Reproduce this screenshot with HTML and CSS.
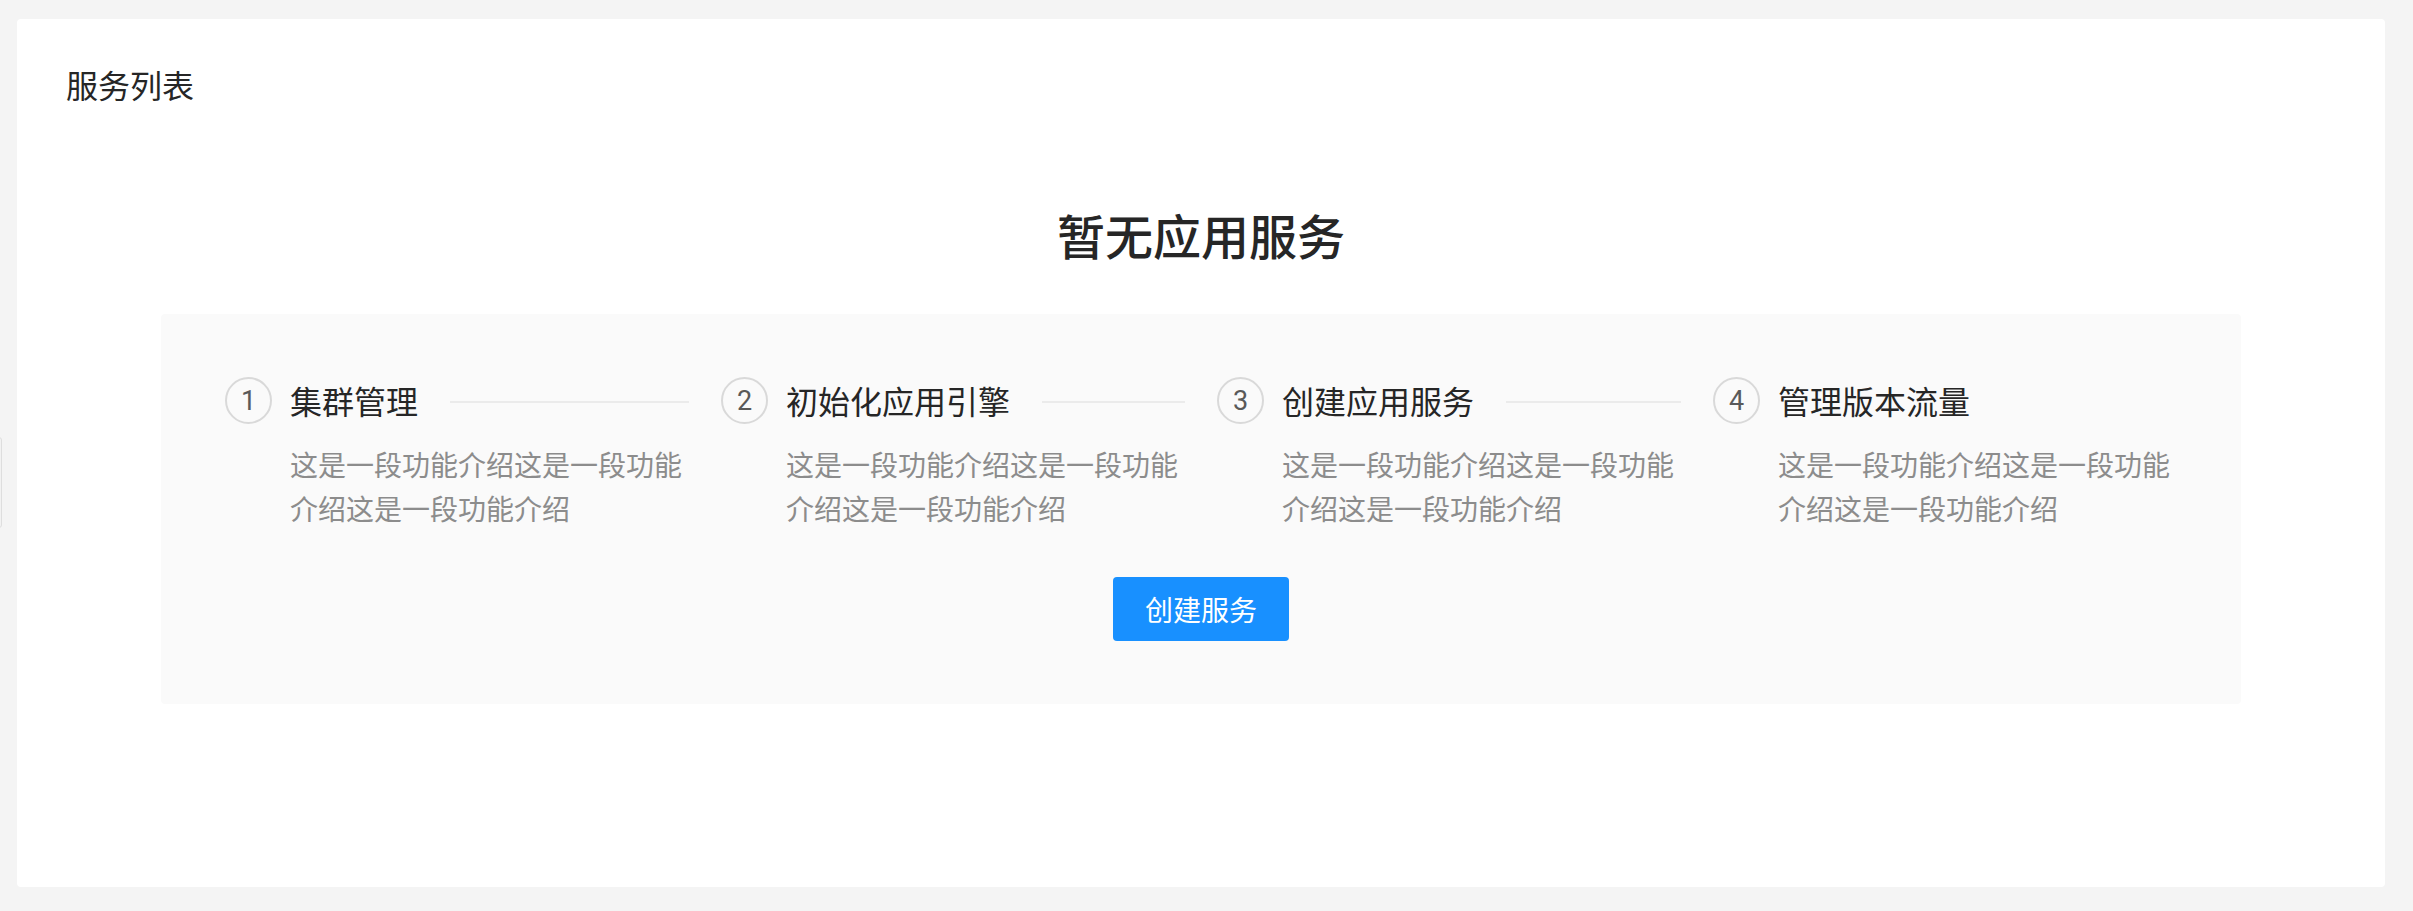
FILE: index.html
```html
<!DOCTYPE html>
<html lang="zh-CN">
<head>
<meta charset="utf-8">
<title>服务列表</title>
<link rel="stylesheet" href="styles.css">
</head>
<body>
<div class="page">
  <div class="edge-handle"></div>
  <div class="card">
    <div class="card-title">服务列表</div>
    <h1 class="empty-title">暂无应用服务</h1>
    <div class="guide">
      <div class="steps">
        <div class="step">
          <div class="step-icon">1</div>
          <div class="step-content">
            <div class="step-title">集群管理</div>
            <div class="step-desc">这是一段功能介绍这是一段功能介绍这是一段功能介绍</div>
          </div>
        </div>
        <div class="step">
          <div class="step-icon">2</div>
          <div class="step-content">
            <div class="step-title">初始化应用引擎</div>
            <div class="step-desc">这是一段功能介绍这是一段功能介绍这是一段功能介绍</div>
          </div>
        </div>
        <div class="step">
          <div class="step-icon">3</div>
          <div class="step-content">
            <div class="step-title">创建应用服务</div>
            <div class="step-desc">这是一段功能介绍这是一段功能介绍这是一段功能介绍</div>
          </div>
        </div>
        <div class="step step-last">
          <div class="step-icon">4</div>
          <div class="step-content">
            <div class="step-title">管理版本流量</div>
            <div class="step-desc">这是一段功能介绍这是一段功能介绍这是一段功能介绍</div>
          </div>
        </div>
      </div>
      <div class="actions">
        <button class="btn-primary" type="button">创建服务</button>
      </div>
    </div>
  </div>
</div>
</body>
</html>
```

FILE: styles.css
```css
* {
  box-sizing: border-box;
}

html, body {
  margin: 0;
  padding: 0;
  background: #f4f4f4;
}

body {
  font-family: "Noto Sans CJK SC", "Noto Sans", sans-serif;
  color: #262626;
}

.page {
  position: relative;
  width: 2413px;
  height: 911px;
  padding: 19px 28px 24px 17px;
  overflow: hidden;
}

.edge-handle {
  position: absolute;
  left: -4px;
  top: 437px;
  width: 6px;
  height: 91px;
  border: 1px solid #dedede;
  border-radius: 3px;
  background: #f2f2f2;
}

.card {
  height: 868px;
  background: #ffffff;
  border-radius: 4px;
  padding: 43px 48px 0 48px;
  display: flex;
  flex-direction: column;
}

.card-title {
  font-size: 32px;
  line-height: 44px;
  color: #262626;
  font-weight: 400;
  padding-left: 1px;
}

.empty-title {
  margin: 94px 0 0 0;
  font-size: 48px;
  line-height: 68px;
  font-weight: 500;
  text-align: center;
  color: #262626;
}

.guide {
  margin: 46px 96px 0 96px;
  background: #fafafa;
  border-radius: 4px;
  padding: 63px 64px 63px 64px;
  display: flex;
  flex-direction: column;
}

.steps {
  display: flex;
}

.step {
  flex: 1 1 0;
  display: flex;
  align-items: flex-start;
  padding-left: 32px;
  overflow: hidden;
  white-space: normal;
}

.step:first-child {
  padding-left: 0;
}

.step-icon {
  flex: none;
  width: 47px;
  height: 47px;
  border: 2px solid #d9d9d9;
  border-radius: 50%;
  display: flex;
  align-items: center;
  justify-content: center;
  font-family: Roboto, "Liberation Sans", sans-serif;
  font-size: 27px;
  color: #595959;
  margin-right: 18px;
}

.step-content {
  flex: 1;
  min-width: 0;
}

.step-title {
  position: relative;
  display: inline-block;
  padding-right: 32px;
  font-size: 32px;
  line-height: 47px;
  color: #262626;
  white-space: nowrap;
}

.step-title::after {
  content: "";
  position: absolute;
  top: 24px;
  left: 100%;
  width: 9999px;
  height: 2px;
  background: #ebebeb;
}

.step-last .step-title::after {
  display: none;
}

.step-desc {
  margin-top: 18px;
  font-size: 28px;
  line-height: 44px;
  color: #8c8c8c;
  max-width: 396px;
}

.actions {
  display: flex;
  justify-content: center;
  margin-top: 47px;
}

.btn-primary {
  height: 64px;
  padding: 0 32px;
  border: none;
  border-radius: 4px;
  background: #1890ff;
  color: #ffffff;
  font-family: "Noto Sans CJK SC", sans-serif;
  font-size: 28px;
  line-height: 64px;
  cursor: pointer;
}
```
